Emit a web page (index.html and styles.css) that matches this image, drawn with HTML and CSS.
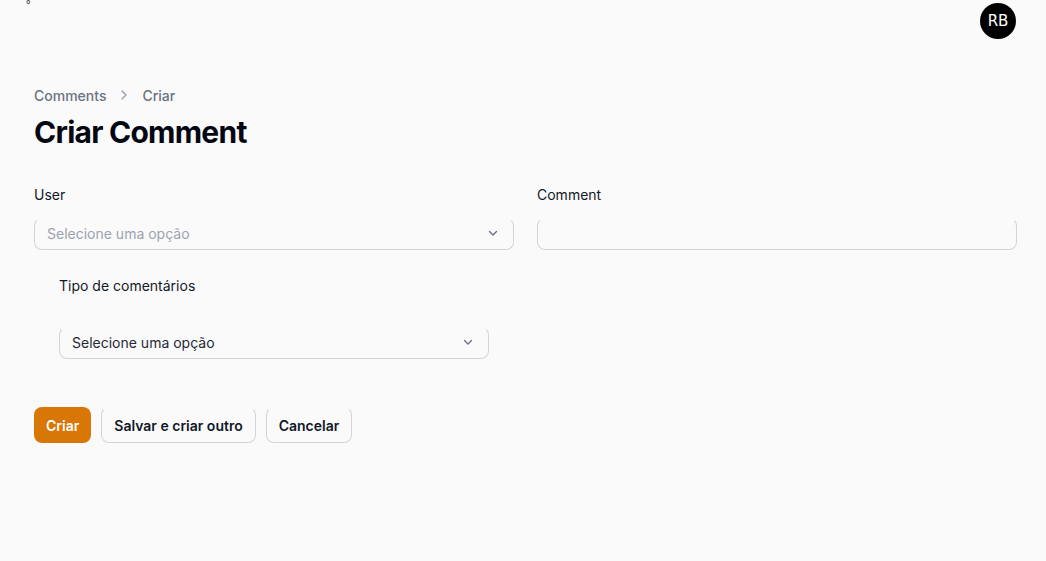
FILE: index.html
```html
<!DOCTYPE html>
<html lang="pt">
<head>
<meta charset="utf-8">
<title>Criar Comment</title>
<link rel="stylesheet" href="styles.css">
</head>
<body>
<header class="topbar">
  <span class="stray">°</span>
  <div class="avatar">RB</div>
</header>
<main class="page">
  <nav class="crumbs">
    <span>Comments</span>
    <svg class="crumb-sep" width="16" height="16" viewBox="0 0 16 16"><path d="M6 4l4 4-4 4" fill="none" stroke="#9ca3af" stroke-width="1.5" stroke-linecap="round" stroke-linejoin="round"/></svg>
    <span>Criar</span>
  </nav>
  <h1 class="title">Criar Comment</h1>

  <form class="form">
    <div class="grid">
      <div class="field">
        <label class="label">User</label>
        <div class="control select">
          <span class="placeholder">Selecione uma opção</span>
          <svg class="chev" width="14" height="14" viewBox="0 0 20 20"><path d="M5 8l5 5 5-5" fill="none" stroke="#6b7280" stroke-width="2" stroke-linecap="round" stroke-linejoin="round"/></svg>
        </div>
      </div>
      <div class="field">
        <label class="label">Comment</label>
        <div class="control"></div>
      </div>
    </div>

    <div class="nested">
      <div class="field narrow">
        <label class="label">Tipo de comentários</label>
        <div class="control select tall-gap">
          <span class="value">Selecione uma opção</span>
          <svg class="chev" width="14" height="14" viewBox="0 0 20 20"><path d="M5 8l5 5 5-5" fill="none" stroke="#6b7280" stroke-width="2" stroke-linecap="round" stroke-linejoin="round"/></svg>
        </div>
      </div>
    </div>

    <div class="actions">
      <button type="button" class="btn primary">Criar</button>
      <button type="button" class="btn ghost">Salvar e criar outro</button>
      <button type="button" class="btn ghost">Cancelar</button>
    </div>
  </form>
</main>
</body>
</html>
```

FILE: styles.css
```css
* { box-sizing: border-box; }
html, body { margin: 0; padding: 0; }
body {
  background: #fafafa;
  font-family: Inter, "Noto Sans", sans-serif;
  color: #111827;
  width: 1046px;
  height: 561px;
  overflow: hidden;
}
.topbar {
  height: 42px;
  display: flex;
  justify-content: space-between;
  align-items: flex-start;
  padding: 3px 30px 0 26px;
}
.stray {
  font-size: 10px;
  line-height: 1;
  margin-top: -4px;
  color: #333;
}
.avatar {
  width: 36px;
  height: 36px;
  border-radius: 50%;
  background: #000;
  color: #fff;
  font-family: "DejaVu Sans", sans-serif;
  font-size: 15px;
  display: flex;
  align-items: center;
  justify-content: center;
}
.page {
  padding: 43px 29px 0 34px;
}
.crumbs {
  display: flex;
  align-items: center;
  gap: 10px;
  font-size: 14px;
  font-weight: 500;
  color: #6b7280;
  height: 20px;
}
.title {
  margin: 9px 0 0;
  font-size: 30px;
  font-weight: 700;
  letter-spacing: -0.025em;
  line-height: 36px;
  color: #030712;
}
.form { margin-top: 35px; }
.grid {
  display: grid;
  grid-template-columns: 480px 480px;
  column-gap: 23px;
}
.field { display: flex; flex-direction: column; }
.label {
  font-size: 14px;
  font-weight: 400;
  color: #111827;
  line-height: 20px;
}
.control {
  margin-top: 13px;
  height: 32px;
  border: 1px solid #d4d4d8;
  border-top-color: transparent;
  border-radius: 8px;
  display: flex;
  align-items: center;
  padding: 0 12px 2px 12px;
  font-size: 14px;
}
.select { justify-content: space-between; }
.placeholder { color: #9ca3af; }
.value { color: #1f2937; }
.chev { margin-right: 1px; }
.nested {
  padding: 26px 0 0 25px;
}
.narrow { width: 430px; }
.tall-gap { margin-top: 31px; }
.actions {
  margin-top: 48px;
  display: flex;
  gap: 10px;
}
.btn {
  font-family: Inter, "Noto Sans", sans-serif;
  font-size: 14px;
  font-weight: 600;
  height: 36px;
  padding: 0 12px;
  border-radius: 8px;
  cursor: pointer;
}
.primary {
  background: #d97706;
  color: #fff;
  border: none;
}
.ghost {
  background: #fafafa;
  color: #111827;
  border: 1px solid #d4d4d8;
  border-top-color: transparent;
}
```
